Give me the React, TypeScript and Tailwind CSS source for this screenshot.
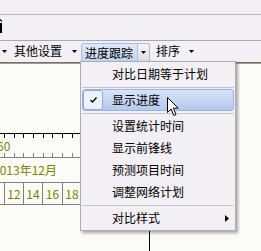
import React from "react";

const Tri = () => (
  <svg width="5" height="3" viewBox="0 0 5 3" className="block">
    <path d="M0 0H5L2.5 3Z" fill="#000" />
  </svg>
);

const ticks = Array.from({ length: 24 }, (_, i) => Math.round(4 + i * 9.67) + 0.5);

export default function App() {
  const font = { fontFamily: '"Noto Sans CJK SC", "Noto Sans", sans-serif' };
  return (
    <div
      className="relative w-[261px] h-[251px] overflow-hidden bg-[#f2f0f4] flex flex-col text-[12px] leading-[14px] text-black"
      style={font}
    >
      <div className="h-[14px] shrink-0" />
      <div className="h-px shrink-0 bg-[#bcbac0]" />
      <div className="h-[25px] shrink-0 flex items-start">
        <svg width="3" height="15" viewBox="0 0 3 15" className="mt-[4px] block">
          <path d="M0 0H1V1H2V3H1V2H0Z" fill="#1a2a9a" />
          <rect x="0" y="4" width="2" height="10" fill="#000" />
        </svg>
      </div>
      <div className="h-px shrink-0 bg-[#a9a7ac]" />
      <div className="h-[20px] shrink-0 flex items-center">
        <div className="ml-[2px]">
          <Tri />
        </div>
        <span className="ml-[7px]">其他设置</span>
        <div className="ml-[10px]">
          <Tri />
        </div>
        <div className="ml-[4px] self-end h-[18px] flex">
          <div className="w-[57px] h-full rounded-tl-[3px] border border-b-0 border-[#a9bde3] bg-gradient-to-b from-[#dfe8f8] to-[#c4d5f1] flex items-center pl-[3px]">
            进度跟踪
          </div>
          <div className="w-[12px] h-full rounded-tr-[3px] border border-l-0 border-b-0 border-[#b4b6c4] bg-gradient-to-b from-[#f4f4f8] to-[#dcdde6] flex items-center justify-center">
            <Tri />
          </div>
        </div>
        <span className="ml-[6px]">排序</span>
        <div className="ml-[9px]">
          <Tri />
        </div>
      </div>
      <div className="h-px shrink-0" />
      <div className="relative flex-1 flex flex-col">
        <div className="h-px shrink-0 bg-[#766f62]" />
        <div className="h-px shrink-0 bg-[#a39d90]" />
        <div className="flex-1 bg-[#fbfcf8] flex flex-col relative">
          <div className="w-[236px] flex flex-col">
            <div className="h-[69px]" />
            <div className="h-px bg-black" />
            <div className="h-[23px] relative text-[#808000]">
              <svg width="236" height="23" className="absolute left-0 top-0">
                {ticks.map((x) => (
                  <g key={x}>
                    <line x1={x} y1="0" x2={x} y2="4" stroke="#000" strokeWidth="1" />
                    <line x1={x} y1="19" x2={x} y2="23" stroke="#808080" strokeWidth="1" />
                  </g>
                ))}
              </svg>
              <span className="absolute left-[-3px] top-[5px]">60</span>
            </div>
            <div className="h-px bg-[#808080]" />
            <div className="h-[24px] flex items-center text-[#808000]">
              <span className="ml-[-7px]">2013年12月</span>
            </div>
            <div className="h-px bg-[#808080]" />
            <div className="h-[21px] flex text-[#808000]">
              <div className="w-[5px] border-r border-[#808080]" />
              {["12", "14", "16", "18", "", "", ""].map((n, i) => (
                <div
                  key={i}
                  className={`${i % 3 === 2 ? "w-[20px]" : "w-[19px]"} border-r border-[#808080] flex items-center justify-center`}
                >
                  {n}
                </div>
              ))}
            </div>
            <div className="h-px bg-[#808080]" />
          </div>
          <div className="absolute left-[149px] top-0 bottom-0 w-px bg-black" />
        </div>
      </div>

      {/* dropdown menu */}
      <div className="absolute left-[80px] top-[61px] w-[156px] h-[170px] border border-[#aeacb2] bg-[#f2f0f4] shadow-[2px_2px_3px_rgba(0,0,0,0.35)] flex flex-col pt-[1px]">
        <div className="h-[22px] flex items-center pl-[31px]">对比日期等于计划</div>
        <div className="h-[4px] pt-[2px] px-[1px]">
          <div className="h-px bg-[#c6c3ca]" />
        </div>
        <div className="h-[22px] mx-[1px] rounded-[3px] border border-[#98b3e2] bg-gradient-to-b from-[#d8e3f7] to-[#b4c8ee] flex items-center">
          <div className="w-[20px] h-[20px] rounded-[3px] border border-[#8ea9da] bg-[#eef1f9] flex items-center justify-center">
            <svg width="7" height="6" viewBox="0 0 7 6" className="block">
              <path d="M0.5 3L2.5 5L6.5 0.5" stroke="#000" strokeWidth="1.3" fill="none" />
            </svg>
          </div>
          <span className="ml-[9px]">显示进度</span>
        </div>
        <div className="h-[4px] pt-[2px] px-[1px]">
          <div className="h-px bg-[#c6c3ca]" />
        </div>
        <div className="h-[22px] flex items-center pl-[31px]">设置统计时间</div>
        <div className="h-[22px] flex items-center pl-[31px]">显示前锋线</div>
        <div className="h-[22px] flex items-center pl-[31px]">预测项目时间</div>
        <div className="h-[22px] flex items-center pl-[31px]">调整网络计划</div>
        <div className="h-[4px] pt-[2px] px-[1px]">
          <div className="h-px bg-[#c6c3ca]" />
        </div>
        <div className="h-[22px] flex items-center pl-[31px] pr-[6px]">
          <span className="flex-1">对比样式</span>
          <svg width="4" height="7" viewBox="0 0 4 7" className="block">
            <path d="M0 0L4 3.5L0 7Z" fill="#000" />
          </svg>
        </div>
      </div>

      {/* mouse cursor */}
      <svg
        width="13"
        height="20"
        viewBox="0 0 13 20"
        className="absolute left-[167px] top-[97px]"
      >
        <path
          d="M0.5 0.5V15.5L4 12L6.8 18.5L9 17.5L6.3 11.2H11.2Z"
          fill="#fff"
          stroke="#000"
          strokeWidth="1"
          strokeLinejoin="miter"
        />
      </svg>
    </div>
  );
}
